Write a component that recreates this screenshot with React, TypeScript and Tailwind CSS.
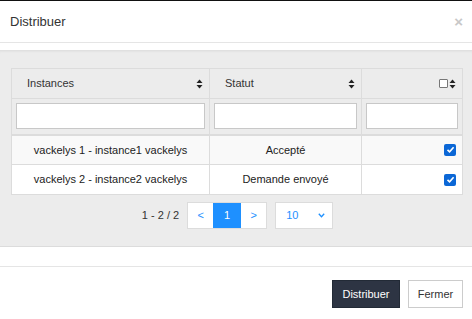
import React from "react";

function SortIcon() {
  return (
    <svg width="7" height="10" viewBox="0 0 7 10" className="shrink-0">
      <path d="M3.5 0.5 L6.5 4 L0.5 4 Z" fill="#222" />
      <path d="M3.5 9.5 L6.5 6 L0.5 6 Z" fill="#222" />
    </svg>
  );
}

function Checked() {
  return (
    <span className="inline-flex h-[12px] w-[12px] items-center justify-center rounded-[2px] bg-[#0b67d6]">
      <svg width="9" height="9" viewBox="0 0 9 9">
        <path d="M1.5 4.8 L3.6 6.8 L7.6 2.2" stroke="white" strokeWidth="1.6" fill="none" />
      </svg>
    </span>
  );
}

const rows = [
  { name: "vackelys 1 - instance1 vackelys", statut: "Accepté", bg: "bg-[#f9f9f9]" },
  { name: "vackelys 2 - instance2 vackelys", statut: "Demande envoyé", bg: "bg-white" },
];

export default function App() {
  return (
    <div
      className="flex h-[319px] w-[472px] flex-col overflow-hidden border-t border-[#111] bg-white text-[#333]"
      style={{ fontFamily: '"Liberation Sans", Arial, sans-serif' }}
    >
      {/* Header */}
      <div className="flex h-[42px] shrink-0 items-center justify-between border-b border-[#e5e5e5] pl-[10px] pr-[9px]">
        <span className="text-[13px] text-[#333]">Distribuer</span>
        <span className="text-[15px] font-bold leading-none text-[#c8c8c8]">×</span>
      </div>

      <div className="h-[7px] shrink-0" />

      {/* Body */}
      <div className="flex h-[197px] shrink-0 flex-col border-b border-[#dcdcdc] bg-[#ececec] px-[11px] pt-[18px] shadow-[inset_0_3px_3px_-2px_rgba(0,0,0,0.08)]">
        <table className="w-[451px] table-fixed border-collapse text-[11px]">
          <colgroup>
            <col className="w-[198px]" />
            <col className="w-[152px]" />
            <col className="w-[101px]" />
          </colgroup>
          <thead>
            <tr className="h-[30px] bg-[#ececec]">
              <th className="border border-[#dcdcdc] pl-[15px] pr-[6px] text-left font-normal">
                <div className="flex items-center justify-between">
                  <span>Instances</span>
                  <SortIcon />
                </div>
              </th>
              <th className="border border-[#dcdcdc] pl-[15px] pr-[6px] text-left font-normal">
                <div className="flex items-center justify-between">
                  <span>Statut</span>
                  <SortIcon />
                </div>
              </th>
              <th className="border border-[#dcdcdc] pr-[6px] font-normal">
                <div className="flex items-center justify-end gap-[1px]">
                  <span className="h-[9px] w-[9px] rounded-[1px] border border-[#777] bg-white" />
                  <SortIcon />
                </div>
              </th>
            </tr>
            <tr className="h-[36px] border-b-2 border-[#dcdcdc] bg-[#ececec]">
              <th className="border border-[#dcdcdc] px-[4px] font-normal">
                <input className="h-[26px] w-full border border-[#c8c8c8] bg-white" />
              </th>
              <th className="border border-[#dcdcdc] px-[4px] font-normal">
                <input className="h-[26px] w-full border border-[#c8c8c8] bg-white" />
              </th>
              <th className="border border-[#dcdcdc] px-[4px] font-normal">
                <input className="h-[26px] w-full border border-[#c8c8c8] bg-white" />
              </th>
            </tr>
          </thead>
          <tbody>
            {rows.map((r) => (
              <tr key={r.name} className={`h-[30px] ${r.bg}`}>
                <td className="border border-[#dcdcdc] text-center text-[#222]">{r.name}</td>
                <td className="border border-[#dcdcdc] text-center text-[#222]">{r.statut}</td>
                <td className="border border-[#dcdcdc] pr-[6px] text-right">
                  <div className="flex justify-end">
                    <Checked />
                  </div>
                </td>
              </tr>
            ))}
          </tbody>
        </table>

        {/* Pagination */}
        <div className="mt-[7px] flex items-center justify-center gap-[8px] pl-[3px] text-[11px]">
          <span className="text-[#333]">1 - 2 / 2</span>
          <div className="flex h-[27px] border border-[#dcdcdc] bg-white">
            <span className="flex w-[25px] items-center justify-center text-[#1e90ff]">&lt;</span>
            <span className="flex w-[28px] items-center justify-center bg-[#1e90ff] text-white">1</span>
            <span className="flex w-[25px] items-center justify-center text-[#1e90ff]">&gt;</span>
          </div>
          <div className="flex h-[27px] w-[58px] items-center justify-between border border-[#dcdcdc] bg-white pl-[10px] pr-[7px] text-[#1e90ff]">
            <span>10</span>
            <svg width="7" height="5" viewBox="0 0 7 5">
              <path d="M0.8 0.8 L3.5 3.8 L6.2 0.8" stroke="#1e90ff" strokeWidth="1.3" fill="none" />
            </svg>
          </div>
        </div>
      </div>

      <div className="h-[20px] shrink-0 border-b border-[#e5e5e5]" />

      {/* Footer */}
      <div className="flex justify-end gap-[8px] pr-[9px] pt-[13px] text-[11px]">
        <button className="h-[28px] w-[68px] border border-[#222a36] bg-[#2d3443] text-white">Distribuer</button>
        <button className="h-[28px] w-[55px] border border-[#cccccc] bg-white text-[#333]">Fermer</button>
      </div>
    </div>
  );
}
